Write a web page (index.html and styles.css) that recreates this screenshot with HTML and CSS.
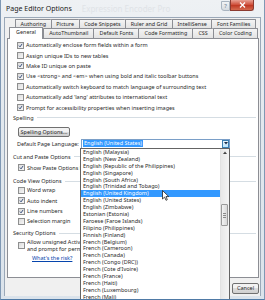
FILE: index.html
```html
<!DOCTYPE html>
<html lang="en">
<head>
    <meta charset="UTF-8">
    <meta name="viewport" content="width=device-width, initial-scale=1.0">
    <title>Page Editor Options</title>
    <link rel="stylesheet" href="styles.css">
</head>
<body>
    <div class="window">
        <div class="titlebar">
            <span class="title">Page Editor Options</span>
            <span class="ghost">Expression Encoder Pro</span>
            <span class="help">?</span>
            <span class="close">
                <svg width="7" height="6" viewBox="0 0 7 6"><path d="M1 0.5 L6 5.5 M6 0.5 L1 5.5" stroke="#fff" stroke-width="1.3"/></svg>
            </span>
        </div>

        <div class="client">
            <div class="tabs">
                <div class="tabrow row1">
                    <span class="tab">Authoring</span>
                    <span class="tab">Picture</span>
                    <span class="tab">Code Snippets</span>
                    <span class="tab">Ruler and Grid</span>
                    <span class="tab">IntelliSense</span>
                    <span class="tab">Font Families</span>
                </div>
                <div class="tabrow row2">
                    <span class="tab active">General</span>
                    <span class="tab">AutoThumbnail</span>
                    <span class="tab">Default Fonts</span>
                    <span class="tab">Code Formatting</span>
                    <span class="tab">CSS</span>
                    <span class="tab">Color Coding</span>
                </div>
            </div>

            <div class="panel">
                <div class="checks">
                    <div class="check"><span class="cb on"><svg viewBox="0 0 7 7"><path d="M1.3 3.6 L2.9 5.4 L5.8 1.2" /></svg></span>Automatically enclose form fields within a form</div>
                    <div class="check"><span class="cb"></span>Assign unique IDs to new tables</div>
                    <div class="check"><span class="cb on"><svg viewBox="0 0 7 7"><path d="M1.3 3.6 L2.9 5.4 L5.8 1.2" /></svg></span>Make ID unique on paste</div>
                    <div class="check"><span class="cb on"><svg viewBox="0 0 7 7"><path d="M1.3 3.6 L2.9 5.4 L5.8 1.2" /></svg></span>Use &lt;strong&gt; and &lt;em&gt; when using bold and italic toolbar buttons</div>
                    <div class="check"><span class="cb"></span>Automatically switch keyboard to match language of surrounding text</div>
                    <div class="check"><span class="cb"></span>Automatically add 'lang' attributes to international text</div>
                    <div class="check"><span class="cb on"><svg viewBox="0 0 7 7"><path d="M1.3 3.6 L2.9 5.4 L5.8 1.2" /></svg></span>Prompt for accessibility properties when inserting images</div>
                </div>

                <div class="group-head spelling"><span>Spelling</span><i></i></div>
                <div class="btn spell-btn">Spelling Options...</div>
                <div class="lang-row">
                    <span class="lang-label">Default Page Language:</span>
                    <div class="select">
                        <span class="sel-text">English (United States)</span>
                        <span class="sel-arrow">
                            <svg width="4" height="3" viewBox="0 0 4 3"><path d="M0 0 H4 L2 2.5 Z" fill="#1b2d4a"/></svg>
                        </span>
                    </div>
                </div>

                <div class="group-head cut"><span>Cut and Paste Options</span><i></i></div>
                <div class="check sub paste clipped"><span class="cb on"><svg viewBox="0 0 7 7"><path d="M1.3 3.6 L2.9 5.4 L5.8 1.2" /></svg></span><span class="cut-text">Show Paste Options buttons</span></div>

                <div class="group-head codeview"><span>Code View Options</span><i></i></div>
                <div class="check sub"><span class="cb"></span>Word wrap</div>
                <div class="check sub"><span class="cb on"><svg viewBox="0 0 7 7"><path d="M1.3 3.6 L2.9 5.4 L5.8 1.2" /></svg></span>Auto indent</div>
                <div class="check sub"><span class="cb on"><svg viewBox="0 0 7 7"><path d="M1.3 3.6 L2.9 5.4 L5.8 1.2" /></svg></span>Line numbers</div>
                <div class="check sub"><span class="cb"></span>Selection margin</div>

                <div class="group-head security"><span>Security Options</span><i></i></div>
                <div class="check sub twoline clipped"><span class="cb"></span><span class="cut-text">Allow unsigned ActiveX controls<br>and prompt for permission</span></div>
                <a class="risk" href="#">What's the risk?</a>
            </div>

            <div class="footer">
                <span class="btn">OK</span>
                <span class="btn">Cancel</span>
            </div>
        </div>

        <!-- open language list, lies over the dialog -->
        <div class="droplist">
            <div class="items">
                <div>English (Malaysia)</div>
                <div>English (New Zealand)</div>
                <div>English (Republic of the Philippines)</div>
                <div>English (Singapore)</div>
                <div>English (South Africa)</div>
                <div>English (Trinidad and Tobago)</div>
                <div class="hl">English (United Kingdom)</div>
                <div>English (United States)</div>
                <div>English (Zimbabwe)</div>
                <div>Estonian (Estonia)</div>
                <div>Faroese (Faroe Islands)</div>
                <div>Filipino (Philippines)</div>
                <div>Finnish (Finland)</div>
                <div>French (Belgium)</div>
                <div>French (Cameroon)</div>
                <div>French (Canada)</div>
                <div>French (Congo (DRC))</div>
                <div>French (Cote d'Ivoire)</div>
                <div>French (France)</div>
                <div>French (Haiti)</div>
                <div>French (Luxembourg)</div>
                <div>French (Mali)</div>
            </div>
            <div class="scroll">
                <span class="up"><svg width="4" height="3" viewBox="0 0 4 3"><path d="M0 3 H4 L2 0.5 Z" fill="#444"/></svg></span>
                <span class="thumb"><i></i><i></i><i></i></span>
            </div>
        </div>

        <svg class="cursor" width="8" height="11" viewBox="0 0 8 11"><path d="M0.5 0.5 V9 L2.6 7.1 L4 10.3 L5.3 9.7 L4 6.6 L6.8 6.6 Z" fill="#fff" stroke="#222" stroke-width="0.8"/></svg>
    </div>
</body>
</html>
```

FILE: styles.css
```css
body, html {
    margin: 0;
    font-family: "Noto Sans", "Open Sans", sans-serif;
    background: #fff;
}

.window {
    position: relative;
    width: 265px;
    height: 300px;
    box-sizing: border-box;
    overflow: hidden;
    display: flex;
    flex-direction: column;
    padding: 0 3px 3px 3px;
    background: linear-gradient(#eef1f4, #e2e8ee 40%, #dbe3eb);
    border: 1px solid #7f98b4;
    border-top: none;
    border-bottom-color: #4f7aa6;
}

/* title bar */
.titlebar {
    height: 17px;
    display: flex;
    align-items: center;
    position: relative;
}

.title {
    margin-left: 2px;
    font-size: 7px;
    color: #1a1a1a;
}

.ghost {
    margin-left: 10px;
    font-size: 8px;
    color: #dfe3e7;
}

.help {
    position: absolute;
    left: 217px;
    top: 1px;
    width: 9px;
    height: 10px;
    box-sizing: border-box;
    border: 1px solid #a9b4c0;
    border-radius: 0 0 0 3px;
    background: linear-gradient(#f1f3f5, #d6dbe0);
    font-size: 6px;
    line-height: 8px;
    text-align: center;
    color: #6c7a88;
}

.close {
    position: absolute;
    left: 226px;
    top: 0;
    width: 24px;
    height: 11px;
    box-sizing: border-box;
    border: 1px solid #8b3a30;
    border-top: none;
    border-radius: 0 0 3px 0;
    background: linear-gradient(#e8a093, #d0533f 45%, #c03a25 55%, #d56a4f);
    display: flex;
    align-items: center;
    justify-content: center;
}

/* dialog body */
.client {
    flex: 1;
    display: flex;
    flex-direction: column;
    background: #f0f0f0;
    padding: 1px 1px 0 2px;
    border: 1px solid #9aa8b8;
    border-bottom: none;
}

.tabs {
    height: 19px;
    display: flex;
    flex-direction: column;
    position: relative;
    z-index: 1;
}

.tabrow {
    display: flex;
    height: 9px;
}

.row1 {
    margin: 0 3px 0 8px;
}

.row2 {
    height: 10px;
    margin: 0 1px 0 2px;
}

.tab {
    flex: 1 1 auto;
    font-size: 5.4px;
    line-height: 8px;
    text-align: center;
    color: #2a2a2a;
    border: 1px solid #8c8e94;
    border-bottom: none;
    border-right: none;
    border-radius: 1px 1px 0 0;
    background: linear-gradient(#f4f4f4, #e3e3e3);
    white-space: nowrap;
}

.tabrow .tab:last-child {
    border-right: 1px solid #8c8e94;
}

.row2 .tab {
    line-height: 9px;
}

.tab.active {
    background: #fff;
    margin-top: -1px;
    height: 11px;
    border-right: 1px solid #8c8e94;
    padding: 0 1px;
}

/* tab page */
.panel {
    height: 240px;
    box-sizing: border-box;
    background: #fff;
    border: 1px solid #8c8e94;
    padding: 1px 2px 0 5px;
    font-size: 5.5px;
    color: #2a2a2a;
}

.check {
    display: flex;
    align-items: center;
    height: 10.4px;
    margin-left: 4px;
    white-space: nowrap;
}

.check.sub {
    margin-left: 5px;
}

/* rows that run under the open list end where the list starts */
.clipped .cut-text {
    width: 53px;
    overflow: hidden;
}

.cb {
    flex: none;
    width: 7px;
    height: 7px;
    box-sizing: border-box;
    margin-right: 2px;
    border: 1px solid #8e8f8f;
    background: linear-gradient(135deg, #dcdcdc, #f6f6f6);
}

.cb svg {
    display: block;
    width: 5px;
    height: 5px;
}

.cb svg path {
    fill: none;
    stroke: #1f3a6e;
    stroke-width: 1.2;
}

.group-head {
    display: flex;
    align-items: center;
    height: 8px;
    white-space: nowrap;
}

.group-head i {
    flex: 1;
    margin-left: 3px;
    border-top: 1px solid #d5dde3;
}

.spelling {
    margin-top: 1px;
    height: 8px;
}

.cut {
    margin-top: 4px;
}

.paste {
    margin-top: 2px;
}

.codeview {
    margin-top: 4px;
}

.security {
    margin-top: 2.4px;
}

.btn {
    display: inline-block;
    box-sizing: border-box;
    height: 10px;
    line-height: 8px;
    padding: 0 4px;
    border: 1px solid #707070;
    border-radius: 2px;
    background: linear-gradient(#f2f2f2 50%, #dcdcdc 50%, #cfcfcf);
    color: #2a2a2a;
    text-align: center;
    font-size: 5.5px;
}

.spell-btn {
    display: block;
    width: 52px;
    margin: 5px 0 2px 5px;
    padding: 0;
}

.lang-row {
    display: flex;
    align-items: center;
    height: 10px;
}

.lang-label {
    width: 64px;
    margin-left: 4px;
}

.select {
    width: 149px;
    height: 10px;
    box-sizing: border-box;
    border: 1px solid #7a9fc8;
    background: #fff;
    display: flex;
    align-items: center;
    padding-left: 1px;
}

.sel-text {
    background: #3399ff;
    color: #fff;
    padding: 0 1px;
    line-height: 7px;
}

.sel-arrow {
    margin-left: auto;
    width: 7px;
    height: 8px;
    box-sizing: border-box;
    border: 1px solid #3c7fb1;
    background: linear-gradient(#eaf6fd, #bee6fd);
    display: flex;
    align-items: center;
    justify-content: center;
}

.twoline {
    height: 14px;
    margin-top: 2px;
    align-items: flex-start;
    line-height: 7px;
}

.twoline .cb {
    margin-top: 3px;
}

.risk {
    display: block;
    margin: 2px 0 0 19px;
    line-height: 7px;
    color: #0645ad;
    text-decoration: underline;
}

/* OK / Cancel */
.footer {
    display: flex;
    justify-content: flex-end;
    gap: 4px;
    padding: 5px 0 0;
}

.footer .btn {
    width: 27px;
    height: 11px;
    line-height: 9px;
    padding: 0;
}

/* open drop-down list */
.droplist {
    position: absolute;
    left: 79px;
    top: 148px;
    width: 150px;
    height: 160px;
    box-sizing: border-box;
    border: 1px solid #646464;
    background: #fff;
    display: flex;
    font-size: 5.5px;
    color: #2a2a2a;
}

.items {
    flex: 1;
}

.items div {
    height: 6.9px;
    line-height: 6.9px;
    padding-left: 2px;
    white-space: nowrap;
}

.items .hl {
    background: #3399ff;
    color: #fff;
}

.scroll {
    width: 8px;
    background: linear-gradient(90deg, #e8e8e8, #f4f4f4);
    border-left: 1px solid #e2e2e2;
    position: relative;
}

.scroll .up {
    display: flex;
    justify-content: center;
    padding-top: 2px;
}

.thumb {
    position: absolute;
    left: 0;
    top: 55px;
    width: 7px;
    height: 22px;
    box-sizing: border-box;
    border: 1px solid #9a9a9a;
    border-radius: 1px;
    background: linear-gradient(90deg, #f3f3f3, #d8d8d8);
    display: flex;
    flex-direction: column;
    align-items: center;
    justify-content: center;
    gap: 1px;
}

.thumb i {
    width: 3px;
    border-top: 1px solid #8a8a8a;
}

.cursor {
    position: absolute;
    left: 161px;
    top: 190px;
}
```
